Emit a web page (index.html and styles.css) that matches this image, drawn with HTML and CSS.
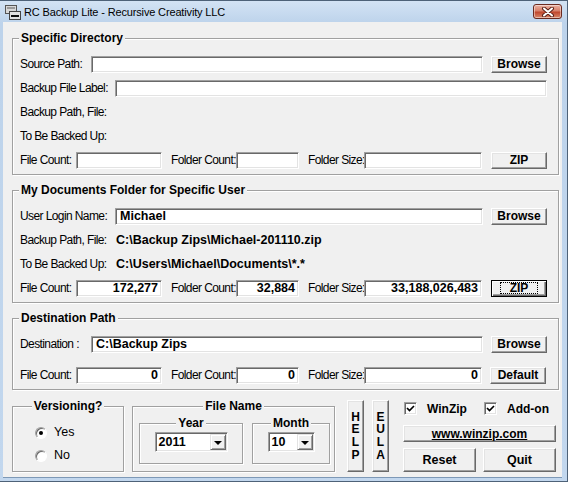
FILE: index.html
```html
<!DOCTYPE html>
<html lang="en">
<head>
  <meta charset="UTF-8">
  <title>RC Backup Lite - Recursive Creativity LLC</title>
  <link rel="stylesheet" href="styles.css">
</head>
<body>
<div class="window">
  <div class="titlebar">
    <svg class="app-icon" width="16" height="16" viewBox="0 0 16 16">
      <rect x="0.5" y="1.5" width="11" height="8" fill="#d8d8d8" stroke="#555"/>
      <rect x="2" y="3" width="8" height="2" fill="#9a9a9a"/>
      <rect x="4.5" y="7.5" width="11" height="8" fill="#e4e4e4" stroke="#444"/>
      <rect x="6" y="11" width="8" height="2" fill="#111"/>
    </svg>
    <span class="title-text">RC Backup Lite - Recursive Creativity LLC</span>
    <div class="close-btn">
      <svg width="14" height="10" viewBox="0 0 14 10">
        <path d="M3 1.5 L11 8.5 M11 1.5 L3 8.5" stroke="#5a2118" stroke-width="4" stroke-linecap="round"/>
        <path d="M3 1.5 L11 8.5 M11 1.5 L3 8.5" stroke="#fff" stroke-width="2" stroke-linecap="round"/>
      </svg>
    </div>
  </div>

  <div class="client">
    <!-- Specific Directory -->
    <div class="group">
      <div class="group-title">Specific Directory</div>
      <div class="rows">
        <div class="row">
          <span class="lbl lbl-src">Source Path:</span>
          <div class="field in-src"></div>
          <div class="btn btn-side">Browse</div>
        </div>
        <div class="row">
          <span class="lbl lbl-wide">Backup File Label:</span>
          <div class="field in-label"></div>
        </div>
        <div class="row">
          <span class="lbl">Backup Path, File:</span>
        </div>
        <div class="row">
          <span class="lbl">To Be Backed Up:</span>
        </div>
        <div class="row">
          <span class="lbl lbl-fc">File Count:</span>
          <div class="field in-fc"></div>
          <span class="lbl lbl-foc">Folder Count:</span>
          <div class="field in-foc"></div>
          <span class="lbl lbl-fs">Folder Size:</span>
          <div class="field in-fs"></div>
          <div class="btn btn-side btn-zip">ZIP</div>
        </div>
      </div>
    </div>

    <!-- My Documents -->
    <div class="group">
      <div class="group-title">My Documents Folder for Specific User</div>
      <div class="rows">
        <div class="row">
          <span class="lbl lbl-wide">User Login Name:</span>
          <div class="field in-user">Michael</div>
          <div class="btn btn-side">Browse</div>
        </div>
        <div class="row">
          <span class="lbl lbl-wide">Backup Path, File:</span>
          <span class="value">C:\Backup Zips\Michael-201110.zip</span>
        </div>
        <div class="row">
          <span class="lbl lbl-wide">To Be Backed Up:</span>
          <span class="value">C:\Users\Michael\Documents\*.*</span>
        </div>
        <div class="row">
          <span class="lbl lbl-fc">File Count:</span>
          <div class="field num in-fc">172,277</div>
          <span class="lbl lbl-foc">Folder Count:</span>
          <div class="field num in-foc">32,884</div>
          <span class="lbl lbl-fs">Folder Size:</span>
          <div class="field num in-fs">33,188,026,483</div>
          <div class="btn btn-side btn-default"><span class="focus">ZIP</span></div>
        </div>
      </div>
    </div>

    <!-- Destination -->
    <div class="group">
      <div class="group-title">Destination Path</div>
      <div class="rows">
        <div class="row">
          <span class="lbl lbl-src">Destination :</span>
          <div class="field in-src">C:\Backup Zips</div>
          <div class="btn btn-side">Browse</div>
        </div>
        <div class="row row-gap">
          <span class="lbl lbl-fc">File Count:</span>
          <div class="field num in-fc">0</div>
          <span class="lbl lbl-foc">Folder Count:</span>
          <div class="field num in-foc">0</div>
          <span class="lbl lbl-fs">Folder Size:</span>
          <div class="field num in-fs">0</div>
          <div class="btn btn-side">Default</div>
        </div>
      </div>
    </div>

    <!-- bottom controls -->
    <div class="bottom">
      <div class="group box-vers">
        <div class="group-title centered">Versioning?</div>
        <div class="radio-row first">
          <span class="radio on"></span><span class="lbl">Yes</span>
        </div>
        <div class="radio-row">
          <span class="radio"></span><span class="lbl">No</span>
        </div>
      </div>

      <div class="group box-fname">
        <div class="group-title centered">File Name</div>
        <div class="sub-row">
          <div class="group box-year">
            <div class="group-title centered">Year</div>
            <div class="combo combo-year">
              <span class="combo-text">2011</span>
              <span class="combo-btn"><span class="arrow"></span></span>
            </div>
          </div>
          <div class="group box-month">
            <div class="group-title centered">Month</div>
            <div class="combo combo-month">
              <span class="combo-text">10</span>
              <span class="combo-btn"><span class="arrow"></span></span>
            </div>
          </div>
        </div>
      </div>

      <div class="btn btn-tall btn-help">H<br>E<br>L<br>P</div>
      <div class="btn btn-tall btn-eula">E<br>U<br>L<br>A</div>

      <div class="side">
        <div class="checks">
          <div class="chk-item chk-first">
            <span class="checkbox">
              <svg width="9" height="9" viewBox="0 0 9 9"><path d="M1 4 L3.5 6.5 L8 2" fill="none" stroke="#000" stroke-width="1.7"/></svg>
            </span>
            <span class="chk-text">WinZip</span>
          </div>
          <div class="chk-item">
            <span class="checkbox">
              <svg width="9" height="9" viewBox="0 0 9 9"><path d="M1 4 L3.5 6.5 L8 2" fill="none" stroke="#000" stroke-width="1.7"/></svg>
            </span>
            <span class="chk-text">Add-on</span>
          </div>
        </div>
        <div class="btn btn-link">www.winzip.com</div>
        <div class="btn-pair">
          <div class="btn btn-big">Reset</div>
          <div class="btn btn-big">Quit</div>
        </div>
      </div>
    </div>
  </div>
</div>
</body>
</html>
```

FILE: styles.css
```css
body {
  margin: 0;
  background: #fff;
}
.window {
  width: 568px;
  height: 482px;
  box-sizing: border-box;
  background: linear-gradient(to bottom, #d3e3f4 0, #bdd3eb 22px, #c2d7ee 100%);
  border-top: 1px solid #4e6278;
  border-right: 1px solid #4e6278;
  border-bottom: 1px solid #4e6278;
  display: flex;
  flex-direction: column;
}
.titlebar {
  height: 21px;
  display: flex;
  align-items: center;
  padding-left: 5px;
  padding-right: 5px;
}
.app-icon {
  margin-top: 1px;
}
.title-text {
  margin-left: 3px;
  font-family: "Liberation Sans", Arial, sans-serif;
  font-size: 11px;
  letter-spacing: -0.15px;
  color: #000;
  flex: 1;
  margin-top: 1px;
}
.close-btn {
  width: 27px;
  height: 13px;
  border: 1px solid #6a2a20;
  border-radius: 3px;
  background: linear-gradient(to bottom, #eab1a3 0, #d7806a 45%, #c0472e 55%, #d8876a 100%);
  display: flex;
  align-items: center;
  justify-content: center;
  box-shadow: inset 0 0 0 1px rgba(255, 255, 255, 0.45);
}

.client {
  height: 456px;
  margin: 0 5px 0 3px;
  background: #f0f0f0;
  box-sizing: border-box;
  padding-left: 9px;
  padding-top: 16px;
  font-family: "Liberation Sans", Arial, sans-serif;
  font-size: 12px;
  letter-spacing: -0.6px;
  color: #000;
  border-bottom: 1px solid #7d98b6;
}

/* group boxes */
.group {
  border: 1px solid #a0a0a0;
  box-shadow: inset 1px 1px 0 #fff, 1px 1px 0 #fff;
  margin-right: 3px;
  margin-bottom: 15px;
}
.group-title {
  width: fit-content;
  margin: -8px 0 0 6px;
  padding: 0 2px;
  height: 14px;
  line-height: 14px;
  background: #f0f0f0;
  font-weight: bold;
  font-size: 12px;
  letter-spacing: 0;
}
.group-title.centered {
  margin-left: auto;
  margin-right: auto;
}
.rows {
  margin-top: 7px;
  padding: 0 10px 2px 7px;
}
.row {
  height: 24px;
  display: flex;
  align-items: center;
}
.row-gap {
  margin-top: 7px;
}
.lbl {
  white-space: nowrap;
  line-height: 15px;
}
.lbl-src { width: 71px; }
.lbl-wide { width: 95px; }
.lbl-fc { width: 56px; }
.lbl-foc { width: 65px; margin-left: 9px; }
.lbl-fs { width: 56px; margin-left: 9px; }

/* classic sunken edit */
.field {
  height: 17px;
  box-sizing: border-box;
  background: #fff;
  border: 1px solid;
  border-color: #a0a0a0 #fff #fff #a0a0a0;
  box-shadow: inset 1px 1px 0 #696969, inset -1px -1px 0 #e3e3e3;
  font-weight: bold;
  font-size: 12.5px;
  letter-spacing: 0;
  line-height: 15px;
  padding: 0 3px 0 4px;
  white-space: nowrap;
  overflow: hidden;
}
.field.num {
  text-align: right;
}
.in-src { width: 392px; }
.in-label { width: 432px; }
.in-user { width: 368px; }
.in-fc { width: 86px; }
.in-foc { width: 63px; }
.in-fs { width: 118px; }

.value {
  font-weight: bold;
  font-size: 12.5px;
  letter-spacing: 0;
  padding-left: 1px;
  white-space: nowrap;
}

/* classic raised button */
.btn {
  box-sizing: border-box;
  background: #f0f0f0;
  border: 1px solid;
  border-color: #fff #696969 #696969 #fff;
  box-shadow: inset -1px -1px 0 #a0a0a0, inset 1px 1px 0 #e3e3e3;
  font-weight: bold;
  font-size: 12px;
  letter-spacing: 0;
  text-align: center;
  display: flex;
  align-items: center;
  justify-content: center;
}
.btn-side {
  width: 56px;
  height: 17px;
  margin-left: 8px;
}
.btn-zip {
  margin-left: 9px;
}
.btn-default {
  margin-left: 9px;
  border: 1px solid #000;
  box-shadow: inset 1px 1px 0 #fff, inset -1px -1px 0 #696969, inset -2px -2px 0 #a0a0a0;
}
.btn-default .focus {
  outline: 1px dotted #000;
  padding: 0 9px;
  line-height: 10px;
}

/* bottom area */
.bottom {
  display: flex;
  align-items: flex-start;
  margin-top: -14px;
}
.bottom .group {
  margin-bottom: 0;
}
.box-vers {
  width: 112px;
  height: 66px;
  box-sizing: border-box;
  margin-top: 15px;
  margin-right: 0;
}
.radio-row {
  height: 23px;
  display: flex;
  align-items: center;
  padding-left: 22px;
  font-size: 12.5px;
  letter-spacing: 0;
}
.radio-row.first {
  margin-top: 8px;
}
.radio {
  width: 12px;
  height: 12px;
  box-sizing: border-box;
  border-radius: 50%;
  background: #fff;
  border: 1px solid;
  border-color: #a0a0a0 #fff #fff #a0a0a0;
  box-shadow: inset 1px 1px 0 #696969;
  margin-right: 7px;
  display: flex;
  align-items: center;
  justify-content: center;
}
.radio.on::after {
  content: "";
  width: 4px;
  height: 4px;
  border-radius: 50%;
  background: #000;
}
.box-fname {
  width: 203px;
  height: 66px;
  box-sizing: border-box;
  margin: 15px 0 0 8px;
}
.sub-row {
  display: flex;
  margin-top: 10px;
  padding-left: 6px;
}
.box-year,
.box-month {
  height: 41px;
  box-sizing: border-box;
  margin-right: 0;
}
.box-year { width: 104px; }
.box-month { width: 78px; margin-left: 9px; }

.combo {
  height: 20px;
  box-sizing: border-box;
  margin: 2px auto 0;
  display: flex;
  background: #fff;
  border: 1px solid;
  border-color: #a0a0a0 #fff #fff #a0a0a0;
  box-shadow: inset 1px 1px 0 #696969, inset -1px -1px 0 #e3e3e3;
  padding: 1px;
}
.combo-year { width: 73px; }
.combo-month { width: 47px; }
.combo-text {
  flex: 1;
  font-weight: bold;
  font-size: 12.5px;
  letter-spacing: 0;
  line-height: 16px;
  padding-left: 2px;
}
.combo-btn {
  width: 16px;
  box-sizing: border-box;
  background: #f0f0f0;
  border: 1px solid;
  border-color: #e3e3e3 #696969 #696969 #e3e3e3;
  box-shadow: inset 1px 1px 0 #fff, inset -1px -1px 0 #a0a0a0;
  display: flex;
  align-items: center;
  justify-content: center;
}
.arrow {
  width: 0;
  height: 0;
  border-top: 4px solid #000;
  border-left: 4px solid transparent;
  border-right: 4px solid transparent;
  margin-top: 1px;
}

.btn-tall {
  width: 17px;
  height: 72px;
  margin-top: 9px;
  line-height: 12.7px;
  font-size: 12px;
}
.btn-help { margin-left: 12px; }
.btn-eula { margin-left: 8px; }

.side {
  width: 153px;
  margin: 11px 0 0 14px;
}
.checks {
  display: flex;
  height: 13px;
  padding-left: 1px;
}
.chk-item {
  display: flex;
  align-items: center;
}
.chk-first {
  width: 80px;
}
.checkbox {
  width: 13px;
  height: 13px;
  box-sizing: border-box;
  background: #fff;
  border: 1px solid;
  border-color: #a0a0a0 #fff #fff #a0a0a0;
  box-shadow: inset 1px 1px 0 #696969, inset -1px -1px 0 #e3e3e3;
  display: flex;
  align-items: center;
  justify-content: center;
}
.chk-text {
  margin-left: 10px;
  font-weight: bold;
  font-size: 12px;
  letter-spacing: 0;
}
.btn-link {
  height: 17px;
  margin-top: 10px;
  text-decoration: underline;
}
.btn-pair {
  display: flex;
  margin-top: 6px;
}
.btn-big {
  width: 73px;
  height: 24px;
  font-size: 12.5px;
}
.btn-big + .btn-big {
  margin-left: 7px;
}
```
